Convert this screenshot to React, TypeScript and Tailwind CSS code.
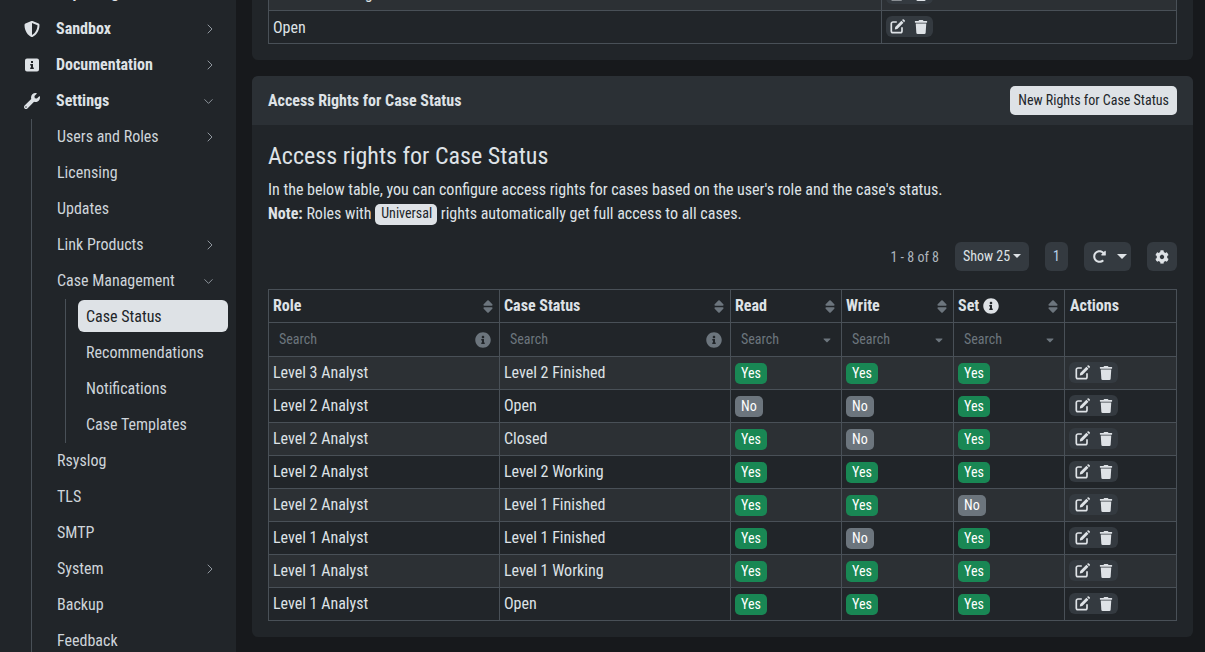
import { ChevronDown, ChevronRight } from "lucide-react";
import {
  FaCaretDown,
  FaCog,
  FaInfoCircle,
  FaRedoAlt,
  FaShieldAlt,
  FaTrash,
  FaWrench,
} from "react-icons/fa";

const accessRows = [
  ["Level 3 Analyst", "Level 2 Finished", "Yes", "Yes", "Yes"],
  ["Level 2 Analyst", "Open", "No", "No", "Yes"],
  ["Level 2 Analyst", "Closed", "Yes", "No", "Yes"],
  ["Level 2 Analyst", "Level 2 Working", "Yes", "Yes", "Yes"],
  ["Level 2 Analyst", "Level 1 Finished", "Yes", "Yes", "No"],
  ["Level 1 Analyst", "Level 1 Finished", "Yes", "No", "Yes"],
  ["Level 1 Analyst", "Level 1 Working", "Yes", "Yes", "Yes"],
  ["Level 1 Analyst", "Open", "Yes", "Yes", "Yes"],
];

function InfoSquare() {
  return (
    <svg width="14" height="14" viewBox="0 0 14 14" className="ml-px" fill="currentColor">
      <path
        fillRule="evenodd"
        d="M2 0.5h10a2 2 0 0 1 2 2v9a2 2 0 0 1-2 2H2a2 2 0 0 1-2-2v-9a2 2 0 0 1 2-2ZM6 3v2h2V3H6ZM5.2 6v1.4H6v2.2h-.8V11h3.6V9.6H8V6H5.2Z"
      />
    </svg>
  );
}

function EditIcon() {
  return (
    <svg width="15" height="15" viewBox="0 0 15 15" className="shrink-0" fill="none" stroke="currentColor">
      <path strokeWidth="1.7" d="M6.8 3H3a1.7 1.7 0 0 0-1.7 1.7V12A1.7 1.7 0 0 0 3 13.7h7.3A1.7 1.7 0 0 0 12 12V8.2" />
      <path fill="currentColor" stroke="none" d="M5.2 7.9 11.4 1.7l2.1 2.1-6.2 6.2-2.5.4.4-2.5ZM12 1.1l.7-.6a.9.9 0 0 1 1.2 0l.8.8a.9.9 0 0 1 0 1.2l-.6.7L12 1.1Z" />
    </svg>
  );
}

function SortIcon() {
  return (
    <svg width="10" height="13" viewBox="0 0 10 13" className="text-[#6c757d]" fill="currentColor">
      <path d="M4.3.6a1 1 0 0 1 1.4 0l3.6 3.7c.6.6.2 1.5-.7 1.5H1.4c-.9 0-1.3-.9-.7-1.5L4.3.6ZM5.7 12.4a1 1 0 0 1-1.4 0L.7 8.7C.1 8.1.5 7.2 1.4 7.2h7.2c.9 0 1.3.9.7 1.5l-3.6 3.7Z" />
    </svg>
  );
}

function Caret({ wide }: { wide?: boolean }) {
  return (
    <span
      className={
        wide
          ? "inline-block border-x-[5.5px] border-t-[5.5px] border-x-transparent border-t-[#dee2e6]"
          : "inline-block border-x-[4px] border-t-[4px] border-x-transparent border-t-[#dee2e6]"
      }
    />
  );
}

function MenuChevron({ open }: { open?: boolean }) {
  return open ? (
    <ChevronDown size={15} strokeWidth={1.2} className="text-[#adb5bd]" />
  ) : (
    <ChevronRight size={16} strokeWidth={1.2} className="text-[#adb5bd]" />
  );
}

function TopItem({ icon, label, open }: { icon?: React.ReactNode; label: string; open?: boolean }) {
  return (
    <div className={`flex h-9 items-center pl-6 font-bold text-[#dee2e6] ${open ? "pr-5" : "pr-[18px]"}`}>
      <span className="flex w-8 items-center">{icon}</span>
      <span className="flex-1">{label}</span>
      <MenuChevron open={open} />
    </div>
  );
}

function SubItem({ label, arrow, open }: { label: string; arrow?: boolean; open?: boolean }) {
  return (
    <div className={`flex h-9 items-center pl-[25px] text-[#ced4da] ${open ? "pr-5" : "pr-[18px]"}`}>
      <span className="flex-1">{label}</span>
      {arrow && <MenuChevron open={open} />}
    </div>
  );
}

function Sidebar() {
  return (
    <aside className="w-[236px] shrink-0 bg-[#212529] pt-[11px]">
      <div className="-mt-[36px]">
        <TopItem label="Reporting" />
      </div>
      <TopItem icon={<FaShieldAlt size={16} />} label="Sandbox" />
      <TopItem icon={<InfoSquare />} label="Documentation" />
      <TopItem icon={<FaWrench size={16} />} label="Settings" open />
      <div className="ml-[31px] border-l border-[#495057]">
        <SubItem label="Users and Roles" arrow />
        <SubItem label="Licensing" />
        <SubItem label="Updates" />
        <SubItem label="Link Products" arrow />
        <SubItem label="Case Management" arrow open />
        <div className="ml-[33px] border-l border-[#495057] pr-2 pl-3 text-[#ced4da]">
          <div className="flex h-9 items-start">
            <div className="mt-px flex h-8 w-full items-center rounded-md bg-[#dee2e6] pt-[2px] pl-2 text-[#212529]">Case Status</div>
          </div>
          <div className="flex h-9 items-center pl-2">Recommendations</div>
          <div className="flex h-9 items-center pl-2">Notifications</div>
          <div className="flex h-9 items-center pl-2">Case Templates</div>
        </div>
        <SubItem label="Rsyslog" />
        <SubItem label="TLS" />
        <SubItem label="SMTP" />
        <SubItem label="System" arrow />
        <SubItem label="Backup" />
        <SubItem label="Feedback" />
      </div>
    </aside>
  );
}

function ActionButtons({ narrow }: { narrow?: boolean }) {
  return (
    <div className="flex h-[21px] items-center">
      <span
        className={`-mt-px flex h-[21px] items-center gap-[9px] rounded-md bg-[#343a40] text-[#dee2e6] ${
          narrow ? "w-[47px] pl-[4px]" : "w-[49px] pl-[6px]"
        }`}
      >
        <EditIcon />
        <FaTrash size={14} />
      </span>
    </div>
  );
}

function Flag({ value }: { value: string }) {
  return (
    <div className="flex h-[21px] items-center">
      <span
        className={`flex h-[21px] items-center rounded-[5px] px-[6px] text-sm text-white ${
          value === "Yes" ? "bg-[#198754]" : "bg-[#6c757d]"
        }`}
      >
        {value}
      </span>
    </div>
  );
}

function HeadCell({ label, info }: { label: string; info?: boolean }) {
  return (
    <th className="border border-[#495057] px-1 text-left font-bold">
      <div className="flex items-center justify-between pr-0.5">
        <span className="flex items-center gap-1">
          {label}
          {info && <FaInfoCircle size={16} />}
        </span>
        <SortIcon />
      </div>
    </th>
  );
}

function SearchCell({ select }: { select?: boolean }) {
  return (
    <td className="border border-[#495057] pr-[8px] pl-[10px] text-sm text-[#6c757d]">
      <div className="flex items-center justify-between">
        <span className="pb-[2px]">Search</span>
        {select ? <FaCaretDown size={12} /> : <FaInfoCircle size={16} />}
      </div>
    </td>
  );
}

function ToolButton({ children }: { children: React.ReactNode }) {
  return <div className="flex h-[29px] items-center justify-center rounded-md bg-[#343a40] text-sm text-[#dee2e6]">{children}</div>;
}

function RightsTable() {
  return (
    <table className="w-full table-fixed border-collapse">
      <colgroup>
        <col className="w-[231px]" />
        <col className="w-[231px]" />
        <col className="w-[111px]" />
        <col className="w-[112px]" />
        <col className="w-[111px]" />
        <col />
      </colgroup>
      <thead>
        <tr className="h-[33px]">
          <HeadCell label="Role" />
          <HeadCell label="Case Status" />
          <HeadCell label="Read" />
          <HeadCell label="Write" />
          <HeadCell label="Set" info />
          <th className="border border-[#495057] pr-1 pl-[5px] text-left font-bold">Actions</th>
        </tr>
        <tr className="h-[34px]">
          <SearchCell />
          <SearchCell />
          <SearchCell select />
          <SearchCell select />
          <SearchCell select />
          <td className="border border-[#495057]" />
        </tr>
      </thead>
      <tbody>
        {accessRows.map((row, i) => (
          <tr key={i} className={`h-[33px] ${i % 2 === 0 ? "bg-[#2c3034]" : ""}`}>
            <td className="border border-[#495057] px-1">{row[0]}</td>
            <td className="border border-[#495057] px-1">{row[1]}</td>
            <td className="border border-[#495057] px-1"><Flag value={row[2]} /></td>
            <td className="border border-[#495057] px-1"><Flag value={row[3]} /></td>
            <td className="border border-[#495057] px-1"><Flag value={row[4]} /></td>
            <td className="border border-[#495057] px-1"><ActionButtons /></td>
          </tr>
        ))}
      </tbody>
    </table>
  );
}

export default function App() {
  return (
    <div className="flex h-screen overflow-hidden bg-[#17191c] font-['Roboto',sans-serif] text-base text-[#dee2e6] [font-stretch:75%]">
      <Sidebar />
      <main className="min-w-0 flex-1 pr-3 pl-4">
        <section className="-mt-[23px] h-[83px] rounded-b-md bg-[#212529] px-4">
          <table className="w-full table-fixed border-collapse">
            <colgroup>
              <col className="w-[613px]" />
              <col />
            </colgroup>
            <tbody>
              <tr className="h-[33px] bg-[#2c3034]">
                <td className="border border-[#495057] px-1">Level 1 Working</td>
                <td className="border border-[#495057] px-1"><ActionButtons narrow /></td>
              </tr>
              <tr className="h-[33px]">
                <td className="border border-[#495057] px-1 pt-[2px]">Open</td>
                <td className="border border-[#495057] px-1"><ActionButtons narrow /></td>
              </tr>
            </tbody>
          </table>
        </section>

        <section className="mt-4 h-[561px] rounded-md bg-[#212529]">
          <div className="flex h-[49px] items-center justify-between rounded-t-md bg-[#2b3035] px-4">
            <h3 className="font-bold">Access Rights for Case Status</h3>
            <button className="h-[29px] rounded-[5px] bg-[#dee2e6] px-2 pb-[2px] text-sm text-[#212529]">New Rights for Case Status</button>
          </div>
          <div className="px-4">
            <h2 className="mt-[17px] text-2xl leading-7">Access rights for Case Status</h2>
            <p className="mt-2 leading-6">
              In the below table, you can configure access rights for cases based on the user's role and the case's status.
            </p>
            <p className="h-6 leading-6">
              <b>Note:</b> Roles with{" "}
              <span className="inline-flex h-[21px] items-center rounded-[5px] bg-[#dee2e6] pr-[5px] pb-[2px] pl-[6px] align-[1px] text-sm text-[#212529]">Universal</span>{" "}
              rights automatically get full access to all cases.
            </p>
            <div className="mt-4 flex items-center justify-end">
              <span className="mr-4 text-sm text-[#adb5bd]">1 - 8 of 8</span>
              <ToolButton>
                <span className="flex w-[74px] items-center justify-center gap-[3px] pb-[2px]">
                  Show 25 <Caret />
                </span>
              </ToolButton>
              <div className="ml-4 w-[23px]"><ToolButton><span className="pb-[2px] text-[#b6cfe8]">1</span></ToolButton></div>
              <div className="ml-4 w-[47px]">
                <ToolButton>
                  <span className="flex w-full items-center gap-[11px] pl-[9px]">
                    <FaRedoAlt size={13} />
                    <Caret wide />
                  </span>
                </ToolButton>
              </div>
              <div className="ml-4 w-[30px]"><ToolButton><FaCog size={14} /></ToolButton></div>
            </div>
            <div className="mt-[18px]">
              <RightsTable />
            </div>
          </div>
        </section>
      </main>
    </div>
  );
}
